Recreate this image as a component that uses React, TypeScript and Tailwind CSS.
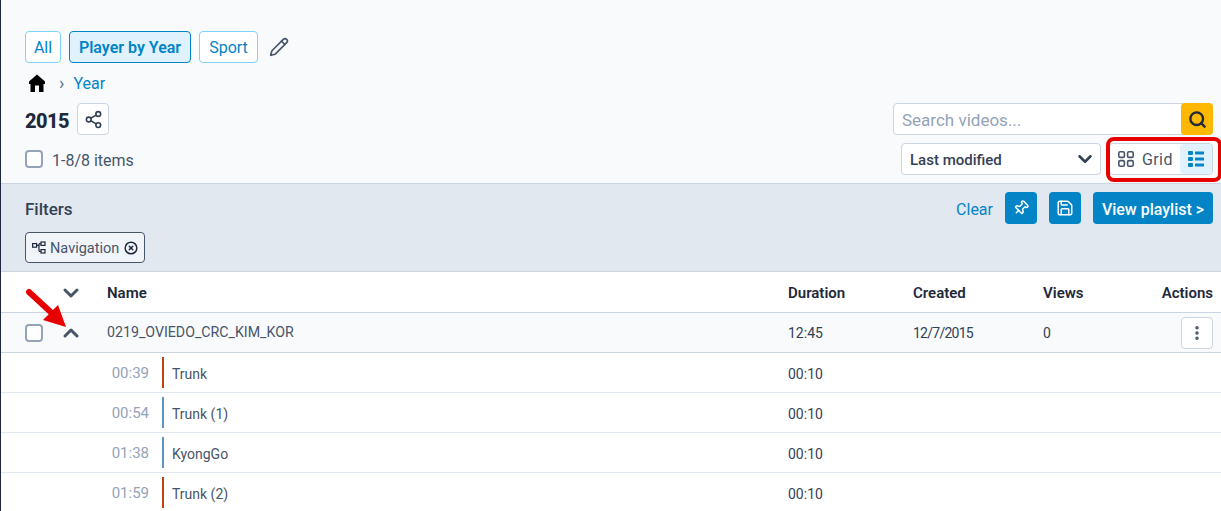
import React from "react";
import { ChevronDown, ChevronUp, Search, Share2, Pencil, Pin, Save, EllipsisVertical, CircleX } from "lucide-react";

const Home = () => (
  <svg width="16" height="18" viewBox="0 0 16 18"><path d="M8 0.5 L16 7.5 V10 H14.5 V18 H10 V11.5 H6 V18 H1.5 V10 H0 V7.5 Z" fill="#000" /></svg>
);

const Nav = () => (
  <svg width="14" height="14" viewBox="0 0 14 14" fill="none" stroke="#1e293b" strokeWidth="1.2">
    <rect x="0.6" y="2.6" width="4" height="3.6" />
    <rect x="9" y="1" width="4" height="3.4" />
    <rect x="9" y="8.6" width="4" height="3.4" />
    <path d="M4.6 4.4 H7 M7 2.7 V10.3 M7 2.7 H9 M7 10.3 H9" />
  </svg>
);

const GridIcon = () => (
  <svg width="16" height="16" viewBox="0 0 16 16" fill="none" stroke="#475569" strokeWidth="1.6">
    <rect x="0.8" y="0.8" width="5.6" height="5.6" rx="1.4" />
    <rect x="9.6" y="0.8" width="5.6" height="5.6" rx="1.4" />
    <rect x="0.8" y="9.6" width="5.6" height="5.6" rx="1.4" />
    <rect x="9.6" y="9.6" width="5.6" height="5.6" rx="1.4" />
  </svg>
);

const ListIcon = () => (
  <svg width="16" height="16" viewBox="0 0 16 16" fill="#0284c7">
    <rect x="0" y="0" width="5" height="4" rx="1" />
    <rect x="0" y="6" width="5" height="4" rx="1" />
    <rect x="0" y="12" width="5" height="4" rx="1" />
    <rect x="7" y="0.6" width="9" height="2.8" rx="0.5" />
    <rect x="7" y="6.6" width="9" height="2.8" rx="0.5" />
    <rect x="7" y="12.6" width="9" height="2.8" rx="0.5" />
  </svg>
);

const Row = ({ t, c, n }: { t: string; c: string; n: string }) => (
  <div className="flex h-10 items-center border-b border-[#e2e8f0] bg-white">
    <div className="w-[148px] pt-[2px] text-right text-[15px] text-[#94a3b8]">{t}</div>
    <div className="ml-[13px] flex h-[31px] items-center"><div className={`h-full w-[2px] ${c}`} /></div>
    <div className="ml-2 w-[616px] pt-[2px] text-sm text-[#475569]">{n}</div>
    <div className="pt-[2px] text-sm text-[#334155]">00:10</div>
  </div>
);

export default function App() {
  return (
    <div className="relative h-[511px] w-full overflow-hidden border-l border-[#1e293b] bg-[#f8fafc] text-[#1e293b] [font-family:Roboto,'Liberation_Sans',sans-serif]">
      <div className="h-[183px] pl-6 pr-2 pt-[31px]">
        <div className="flex h-8 items-center">
          <div className="flex h-8 w-9 items-center justify-center rounded border border-[#7dd3fc] bg-white pt-[2px] text-base text-[#0284c7]">All</div>
          <div className="ml-2 flex h-8 w-[122px] items-center justify-center rounded border border-[#0284c7] bg-[#e0f2fe] pt-[2px] text-base font-semibold text-[#0284c7]">Player by Year</div>
          <div className="ml-2 flex h-8 w-[59px] items-center justify-center rounded border border-[#7dd3fc] bg-white pt-[2px] text-base text-[#0284c7]">Sport</div>
          <Pencil className="ml-[11px] text-[#475569]" size={20} strokeWidth={2} />
        </div>
        <div className="mt-[11px] flex h-[18px] items-center pl-[4px]">
          <Home />
          <span className="ml-[14px] text-lg text-[#64748b]">›</span>
          <span className="ml-[9px] pt-[2px] text-base text-[#0284c7]">Year</span>
        </div>
        <div className="mt-[11px] flex h-8 items-center justify-between">
          <div className="flex items-center">
            <span className="pt-1 text-xl font-extrabold tracking-tight">2015</span>
            <div className="ml-2 flex size-8 items-center justify-center rounded border border-[#cbd5e1] bg-white">
              <Share2 size={19} strokeWidth={2} className="text-[#334155]" />
            </div>
          </div>
          <div className="flex h-8 w-80 items-center rounded border border-[#cbd5e1] bg-white">
            <span className="flex-1 pl-2 pt-1 text-[17px] text-[#94a3b8]">Search videos...</span>
            <div className="-mr-px flex size-8 items-center justify-center rounded bg-[#ffb800]">
              <Search size={19} strokeWidth={3} className="text-[#1e293b]" />
            </div>
          </div>
        </div>
        <div className="mt-2 flex h-8 items-center justify-between">
          <div className="flex items-center">
            <div className="size-[18px] rounded border-2 border-[#94a3b8] bg-white" />
            <span className="ml-[9px] pt-1 text-base text-[#475569]">1-8/8 items</span>
          </div>
          <div className="flex items-center">
            <div className="flex h-8 w-[200px] items-center justify-between rounded border border-[#cbd5e1] bg-white pl-2 pr-1">
              <span className="pt-[2px] text-[15px] font-medium text-[#334155]">Last modified</span>
              <ChevronDown size={22} strokeWidth={2.75} className="text-[#334155]" />
            </div>
            <div className="ml-2 flex h-8 w-[104px] items-center justify-between rounded border border-[#cbd5e1] bg-white">
              <div className="flex items-center pl-2">
                <GridIcon />
                <span className="ml-2 pt-[2px] text-base tracking-wide text-[#475569]">Grid</span>
              </div>
              <div className="flex h-[30px] w-8 items-center justify-center rounded bg-[#e0f2fe]">
                <ListIcon />
              </div>
            </div>
          </div>
        </div>
      </div>

      <div className="h-[89px] border-y border-[#cbd5e1] bg-[#e2e8f0] pl-6 pr-2 pt-2">
        <div className="flex h-8 items-center justify-between">
          <span className="pt-1 text-[17px] font-medium text-[#334155]">Filters</span>
          <div className="flex items-center">
            <span className="pt-1 text-base text-[#0284c7]">Clear</span>
            <div className="ml-3 flex size-8 items-center justify-center rounded bg-[#0284c7]"><Pin size={16} strokeWidth={2.25} className="rotate-45 text-white" /></div>
            <div className="ml-3 flex size-8 items-center justify-center rounded bg-[#0284c7]"><Save size={18} strokeWidth={2} className="text-white" /></div>
            <div className="ml-3 flex h-8 w-[120px] items-center justify-center rounded bg-[#0284c7] pt-1 text-base font-medium text-white">View playlist &gt;</div>
          </div>
        </div>
        <div className="mt-2 flex h-[31px] w-[120px] items-center rounded border border-[#475569] bg-[#f1f5f9] pl-[6px]">
          <Nav />
          <span className="ml-[4px] pt-[2px] text-[14.5px] text-[#475569]">Navigation</span>
          <CircleX size={14} strokeWidth={2.5} className="ml-[5px] text-[#1e293b]" />
        </div>
      </div>

      <div className="flex h-[41px] items-center border-b border-[#cbd5e1] bg-white pl-6 pr-2 pt-[2px] text-[15px] font-semibold">
        <div className="flex w-[82px] pl-[34px]"><ChevronDown size={24} strokeWidth={3} className="text-[#475569]" /></div>
        <div className="w-[681px]">Name</div>
        <div className="w-[125px]">Duration</div>
        <div className="w-[130px]">Created</div>
        <div className="flex-1">Views</div>
        <div>Actions</div>
      </div>

      <div className="flex h-10 items-center border-b border-[#cbd5e1] bg-[#f8fafc] pl-6 pr-2 text-sm">
        <div className="flex w-[82px] items-center">
          <div className="size-[18px] rounded border-2 border-[#94a3b8] bg-white" />
          <ChevronUp size={24} strokeWidth={3} className="ml-[16px] text-[#475569]" />
        </div>
        <div className="w-[681px] text-[14.2px] text-[#475569]">0219_OVIEDO_CRC_KIM_KOR</div>
        <div className="w-[125px] text-[#334155]">12:45</div>
        <div className="w-[130px] tracking-[-0.75px] text-[#334155]">12/7/2015</div>
        <div className="flex-1 text-[#334155]">0</div>
        <div className="flex size-8 items-center justify-center rounded border border-[#cbd5e1] bg-white"><EllipsisVertical size={18} strokeWidth={2.75} className="text-[#475569]" /></div>
      </div>

      <Row t="00:39" c="bg-[#c2410c]" n="Trunk" />
      <Row t="00:54" c="bg-[#5b93c7]" n="Trunk (1)" />
      <Row t="01:38" c="bg-[#5b93c7]" n="KyongGo" />
      <Row t="01:59" c="bg-[#c2410c]" n="Trunk (2)" />

      <div className="absolute left-[1105px] top-[137px] h-[45px] w-[116px] rounded-lg border-[4px] border-[#e60000]" />
      <svg className="absolute left-[24px] top-[285px]" width="46" height="46" viewBox="0 0 46 46">
        <path d="M4 7 L30 31" stroke="#e60000" strokeWidth="6" strokeLinecap="round" />
        <path d="M41 42 L18 35 L33 20 Z" fill="#e60000" />
      </svg>
    </div>
  );
}
